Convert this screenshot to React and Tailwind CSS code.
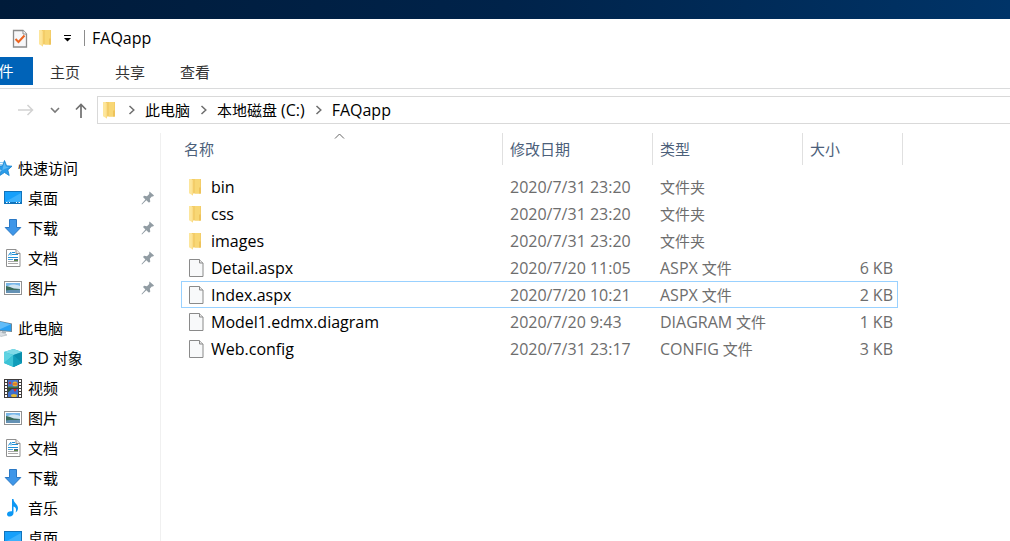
import React from "react";

function FolderIcon() {
  return (
    <svg width="13" height="18" viewBox="0 0 13 18" aria-hidden="true">
      <path d="M2 1H12V15.500H4Z" fill="#f3cd69" />
      <path d="M6 1H11V15.500H6Z" fill="#f8d775" />
      <path d="M10 9.500H12V15.500H10Z" fill="#eec35b" />
      <path d="M0 1H2.500L4 3V17.500L0 15.300Z" fill="#fde69c" />
      <path d="M4 3V17.500L2.800 16.700V1.500Z" fill="#fbdc87" />
    </svg>
  );
}

function FileIcon() {
  return (
    <svg width="15" height="18" viewBox="0 0 15 18" aria-hidden="true">
      <path d="M0.500 0.500H10.500L14 4V17.500H0.500Z" fill="#f8f9fa" stroke="#8a8a8a" />
      <path d="M10.500 0.500V4H14" fill="#e4e4e4" stroke="#8a8a8a" />
    </svg>
  );
}

function CheckPageIcon() {
  return (
    <svg width="16" height="19" viewBox="0 0 16 19" aria-hidden="true">
      <path d="M1.500 1.500H11L14.500 5V18H1.500Z" fill="#f7f7f9" stroke="#8c8c8c" strokeWidth="1.300" />
      <path d="M11 1.500V5H14.500" fill="#fff" stroke="#8c8c8c" />
      <path d="M3.500 10L6.500 13L12.500 6.500" fill="none" stroke="#ec6420" strokeWidth="2" />
    </svg>
  );
}

function StarIcon() {
  return (
    <svg width="18" height="18" viewBox="0 0 18 18" aria-hidden="true">
      <path d="M10.500 1.500L12.600 6.800L18 7.200L13.800 10.900L15.200 16.500L10.500 13.500L5.800 16.500L7.200 10.900L3 7.200L8.400 6.800Z" fill="#2b9ce9" stroke="#1581cd" strokeWidth="0.800" />
      <path d="M10.500 3.500L11.800 7.500L15.500 8L8.400 11L9 8Z" fill="#5bb9f5" />
      <path d="M3 3.500H9M2 5.500H8M5 11.500H7.500" stroke="#8fcdf6" />
    </svg>
  );
}

function DesktopIcon() {
  return (
    <svg width="18" height="18" viewBox="0 0 18 18" aria-hidden="true">
      <rect x="0.500" y="2.500" width="17" height="12" fill="#16a0fb" stroke="#1173bb" />
      <path d="M1 13L17 4V14H1Z" fill="#3cb1fc" />
      <path d="M1 13.500H17" stroke="#1173bb" />
      <path d="M2 13.500H3.500M5 13.500H6M12 13.500H13M14.500 13.500H16" stroke="#fff" />
    </svg>
  );
}

function DownloadIcon() {
  return (
    <svg width="18" height="18" viewBox="0 0 18 18" aria-hidden="true">
      <path d="M5.500 0.500H12.500V8.500H16.800L9 16.500L1.200 8.500H5.500Z" fill="#3e96e8" stroke="#2a78c4" />
    </svg>
  );
}

function DocumentIcon() {
  return (
    <svg width="18" height="18" viewBox="0 0 18 18" aria-hidden="true">
      <path d="M2.500 0.500H12L16 4.500V17.500H2.500Z" fill="#fff" stroke="#909090" />
      <path d="M12 0.500V4.500H16" fill="#eee" stroke="#909090" />
      <path d="M4.500 6.500L6.500 3.500H7V6.500M8 3.500H11M8 5.500H14M4 8.500H14" fill="none" stroke="#1e90d8" />
      <path d="M4 10.500H9" stroke="#3da4e4" />
      <path d="M4 12.500H14M4 14.500H14" stroke="#a8a8a8" />
      <rect x="10" y="10" width="4" height="2" fill="#35679a" />
      <path d="M10 11.500H14" stroke="#5c8a48" />
    </svg>
  );
}

function PictureIcon() {
  return (
    <svg width="18" height="18" viewBox="0 0 18 18" aria-hidden="true">
      <rect x="0.500" y="2.500" width="17" height="13" fill="#fff" stroke="#929292" />
      <rect x="2" y="4" width="14" height="5" fill="#79b7e8" />
      <path d="M5 6.500C8 5 12 5.500 16 7V11H2V8Z" fill="#cfe4f2" />
      <path d="M2 7C5 7.300 7 8.500 10 9.500L16 10V12H2Z" fill="#3c6c5b" />
      <path d="M2 11.500C7 10.500 11 11.500 16 10.500V14H2Z" fill="#6491b4" />
    </svg>
  );
}

function ComputerIcon() {
  return (
    <svg width="20" height="18" viewBox="0 0 20 18" aria-hidden="true">
      <path d="M3 1L20 4.500V13L3 11.500Z" fill="#6d8797" />
      <path d="M4 2L19 5.200V12L4 10.500Z" fill="#27a0f3" />
      <path d="M4 2L19 5.200L7 10.600L4 10.500Z" fill="#61bcf8" />
      <path d="M10 12L14 12.500V14.500L10 14Z" fill="#a8b2b9" />
      <path d="M3 13.500L8 12.500L15 16L9 17.500Z" fill="#dce1e5" stroke="#a8b0b6" strokeWidth="0.600" />
    </svg>
  );
}

function CubeIcon() {
  return (
    <svg width="18" height="18" viewBox="0 0 18 18" aria-hidden="true">
      <path d="M9.500 0L18 3V14L9.500 18L0 14V3Z" fill="#25b5cb" />
      <path d="M9.500 0L18 3L9.500 6L0 3Z" fill="#7fdbe8" />
      <path d="M0 3L9.500 6L0 14Z" fill="#5fd3e2" />
      <path d="M0 14L9.500 6V18Z" fill="#3cc3d6" />
      <path d="M18 3L9.500 6V18L18 14Z" fill="#0a8eac" />
      <path d="M9.500 6L18 14L9.500 18Z" fill="#109dba" />
    </svg>
  );
}

function VideoIcon() {
  return (
    <svg width="18" height="19" viewBox="0 0 18 19" aria-hidden="true">
      <rect width="18" height="19" fill="#403d3d" />
      <path d="M2 1V18M16 1V18" stroke="#fff" strokeWidth="2" strokeDasharray="2 1" />
      <rect x="4" y="1" width="10" height="8" fill="#4678d3" />
      <rect x="4" y="10" width="10" height="8" fill="#3d70cf" />
      <ellipse cx="11" cy="5" rx="2.500" ry="2.500" fill="#e8b22a" />
      <path d="M8.500 5H13.500" stroke="#d64331" />
      <path d="M4 8C7 6.500 10 8.500 14 7.500V9H4Z" fill="#41763f" />
      <path d="M9 10H13L11 13Z" fill="#d82828" />
      <circle cx="6" cy="4" r="1.300" fill="#c6384b" />
      <ellipse cx="10" cy="16.500" rx="3" ry="1.500" fill="#e5bb35" />
      <path d="M4 10H8L4 13.500Z" fill="#2d5538" />
    </svg>
  );
}

function MusicIcon() {
  return (
    <svg width="18" height="18" viewBox="0 0 18 18" aria-hidden="true">
      <path d="M8 0H9.500C9.500 4 14 5 14 9C14 11 13 12.500 11.500 13.500C12.700 10.500 12 8.500 9.500 7.500V14C9.500 16.200 7.800 17.500 5.800 17.500C4.200 17.500 3 16.700 3 15.200C3 13.300 5 12 8 12.300Z" fill="#0d98f4" />
    </svg>
  );
}

function PinIcon() {
  return (
    <svg width="14" height="14" viewBox="0 0 14 14" aria-hidden="true">
      <path d="M8.500 0.500L13 4.500L12 5.500H10.800L8.800 7.800L9.300 10.500L8 11.800L5.300 9.300L1 13.500L0.500 13L4.400 8.400L2 6L3.200 4.800L6 5.200L8.200 3V1.500Z" fill="#919ca3" />
    </svg>
  );
}

function Chevron() {
  return (
    <svg width="7" height="10" viewBox="0 0 7 10" aria-hidden="true">
      <path d="M1.500 1L5.800 5L1.500 9" fill="none" stroke="#6e6e6e" strokeWidth="1.500" />
    </svg>
  );
}

// Latin runs are set one step larger than the Chinese text beside them.
function Mixed({ text }) {
  return text
    .split(/([\x21-\x7e]+)/)
    .map((part, i) => (i % 2 ? <span key={i} className="text-base leading-6">{part}</span> : part));
}

const quickAccess = [
  ["桌面", DesktopIcon],
  ["下载", DownloadIcon],
  ["文档", DocumentIcon],
  ["图片", PictureIcon],
];

const computer = [
  ["3D 对象", CubeIcon],
  ["视频", VideoIcon],
  ["图片", PictureIcon],
  ["文档", DocumentIcon],
  ["下载", DownloadIcon],
  ["音乐", MusicIcon],
  ["桌面", DesktopIcon],
];

const files = [
  { name: "bin", date: "2020/7/31 23:20", type: "文件夹", size: "", folder: true },
  { name: "css", date: "2020/7/31 23:20", type: "文件夹", size: "", folder: true },
  { name: "images", date: "2020/7/31 23:20", type: "文件夹", size: "", folder: true },
  { name: "Detail.aspx", date: "2020/7/20 11:05", type: "ASPX 文件", size: "6 KB" },
  { name: "Index.aspx", date: "2020/7/20 10:21", type: "ASPX 文件", size: "2 KB", focused: true },
  { name: "Model1.edmx.diagram", date: "2020/7/20 9:43", type: "DIAGRAM 文件", size: "1 KB" },
  { name: "Web.config", date: "2020/7/31 23:17", type: "CONFIG 文件", size: "3 KB" },
];

function NavGroup({ label, icon, items, pinned }) {
  return (
    <ul>
      <li>
        <a href="#" className="-ml-2 flex h-[30px] items-center gap-1.5">
          <span className="flex w-5 justify-end">{icon}</span>
          {label}
        </a>
      </li>
      {items.map(([name, Icon]) => (
        <li key={name}>
          <a href="#" className="flex h-[30px] items-center gap-1.5 pr-[5px] pl-1">
            <Icon />
            <span className="grow"><Mixed text={name} /></span>
            {pinned && <PinIcon />}
          </a>
        </li>
      ))}
    </ul>
  );
}

function FileRow({ file }) {
  const line = file.focused ? "border-[#99d1ff]" : "border-transparent";
  return (
    <tr className="h-[27px]">
      <td className={"border-y border-l p-0 pl-[7px] " + line}>
        <div className="flex items-center gap-[7px] text-base leading-6 text-black">
          <span className="flex w-[15px]">{file.folder ? <FolderIcon /> : <FileIcon />}</span>
          {file.name}
        </div>
      </td>
      <td className={"border-y p-0 pl-[7px] text-base leading-6 " + line}>{file.date}</td>
      <td className={"border-y p-0 pl-[7px] leading-6 " + line}><Mixed text={file.type} /></td>
      <td className={"border-y border-r p-0 pr-1 text-right leading-6 " + line}><Mixed text={file.size} /></td>
      <td className="p-0" />
    </tr>
  );
}

export default function App() {
  const heading = "flex h-8 items-center border-r border-[#e0e0e0] font-normal text-[#4c607a]";
  return (
    <div className="flex h-screen flex-col overflow-hidden bg-white font-['Open_Sans','Noto_Sans_CJK_SC',sans-serif] text-[15px] leading-6 text-black">
      <div className="h-[19px] shrink-0 bg-linear-to-r from-[#001b3a] via-[#00234a] to-[#003468]" />

      <header className="shrink-0">
        <div className="flex h-[38px] items-center pl-3">
          <button aria-label="属性"><CheckPageIcon /></button>
          <button aria-label="新建文件夹" className="ml-[11px]"><FolderIcon /></button>
          <button aria-label="自定义快速访问工具栏" className="ml-[11px]">
            <svg width="9" height="8" viewBox="0 0 9 8" aria-hidden="true">
              <path d="M1 1.500H8" stroke="#000" />
              <path d="M1 4H8L4.500 7.500Z" fill="#000" />
            </svg>
          </button>
          <span className="ml-3 h-4 w-px bg-[#8c8c8c]" />
          <h1 className="ml-[7px] text-base">FAQapp</h1>
        </div>
        <nav className="flex h-8 items-start border-b border-[#dadbdc] text-[#333]">
          <button className="-ml-9 h-7 w-[69px] bg-[#0063b8] text-white">文件</button>
          <button className="h-[30px] w-16">主页</button>
          <button className="h-[30px] w-[66px]">共享</button>
          <button className="h-[30px] w-16">查看</button>
        </nav>
      </header>

      <div className="flex shrink-0 items-center pt-[7px] pb-[9px]">
        <div className="flex w-[97px] shrink-0 items-center pl-[18px]">
          <button aria-label="前进">
            <svg width="16" height="12" viewBox="0 0 16 12" aria-hidden="true">
              <path d="M0 6H15M9.500 1L14.500 6L9.500 11" fill="none" stroke="#d2d2d2" strokeWidth="1.500" />
            </svg>
          </button>
          <button aria-label="最近浏览的位置" className="ml-4">
            <svg width="10" height="7" viewBox="0 0 10 7" aria-hidden="true">
              <path d="M1 1L5 5L9 1" fill="none" stroke="#7a7a7a" strokeWidth="1.600" />
            </svg>
          </button>
          <button aria-label="上移" className="ml-[15px]">
            <svg width="12" height="15" viewBox="0 0 12 15" aria-hidden="true">
              <path d="M6 15V1.500M1 6.500L6 1.500L11 6.500" fill="none" stroke="#707070" strokeWidth="1.700" />
            </svg>
          </button>
        </div>
        <nav aria-label="地址" className="flex h-7 grow items-center border border-r-0 border-[#d9d9d9] pl-[5px]">
          <FolderIcon />
          <span className="ml-3 flex items-center gap-2.5">
            <Chevron />
            <a href="#">此电脑</a>
            <Chevron />
            <a href="#"><Mixed text="本地磁盘 (C:)" /></a>
            <Chevron />
            <a href="#" className="text-base">FAQapp</a>
          </span>
        </nav>
      </div>

      <div className="flex min-h-0 grow">
        <aside className="flex w-[161px] shrink-0 flex-col gap-2.5 overflow-hidden border-r border-[#f0f0f0] pt-5">
          <NavGroup label="快速访问" icon={<StarIcon />} items={quickAccess} pinned />
          <NavGroup label="此电脑" icon={<ComputerIcon />} items={computer} />
        </aside>
        <main className="min-w-0 grow overflow-hidden pl-5">
          <table className="w-[722px] table-fixed border-separate border-spacing-0 text-left text-[#6d6d6d]">
            <colgroup>
              <col className="w-[322px]" />
              <col className="w-[150px]" />
              <col className="w-[150px]" />
              <col className="w-[95px]" />
              <col className="w-[5px]" />
            </colgroup>
            <thead>
              <tr className="h-10 align-top">
                <th className="relative p-0">
                  <div className={heading + " pl-[3px]"}>名称</div>
                  <svg className="absolute top-0 left-[153px]" width="11" height="6" viewBox="0 0 11 6" aria-hidden="true">
                    <path d="M1 5.500L5.500 1L10 5.500" fill="none" stroke="#666" />
                  </svg>
                </th>
                <th className="p-0"><div className={heading + " pl-[7px]"}>修改日期</div></th>
                <th className="p-0"><div className={heading + " pl-[7px]"}>类型</div></th>
                <th className="p-0" colSpan={2}><div className={heading + " pl-[7px]"}>大小</div></th>
              </tr>
            </thead>
            <tbody>
              {files.map((file) => (
                <FileRow key={file.name} file={file} />
              ))}
            </tbody>
          </table>
        </main>
      </div>
    </div>
  );
}
